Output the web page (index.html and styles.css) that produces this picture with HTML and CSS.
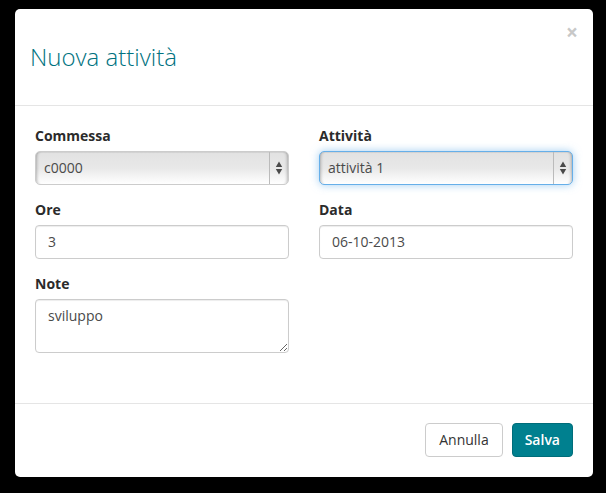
FILE: index.html
```html
<!DOCTYPE html>
<html lang="it">
<head>
<meta charset="utf-8">
<title>Nuova attività</title>
<link rel="stylesheet" href="styles.css">
</head>
<body>
<form class="modal" role="dialog" aria-labelledby="modal-title">
  <header class="modal-header">
    <h1 class="modal-title" id="modal-title">Nuova attività</h1>
    <button class="close" type="button">×</button>
  </header>
  <div class="modal-body">
    <div class="field">
      <label for="commessa">Commessa</label>
      <div class="select">
        <select id="commessa"><option>c0000</option></select>
        <svg class="arrows" viewBox="0 0 8 14" width="8" height="14"><path d="M4 .5 7.2 6H.8ZM.8 8h6.4L4 13.500Z"/></svg>
      </div>
    </div>
    <div class="field">
      <label for="attivita">Attività</label>
      <div class="select select-active">
        <select id="attivita"><option>attività 1</option></select>
        <svg class="arrows" viewBox="0 0 8 14" width="8" height="14"><path d="M4 .5 7.2 6H.8ZM.8 8h6.4L4 13.500Z"/></svg>
      </div>
    </div>
    <div class="field">
      <label for="ore">Ore</label>
      <input class="control" id="ore" type="text" value="3">
    </div>
    <div class="field">
      <label for="data">Data</label>
      <input class="control" id="data" type="text" value="06-10-2013">
    </div>
    <div class="field">
      <label for="note">Note</label>
      <textarea class="control" id="note" rows="2">sviluppo</textarea>
    </div>
  </div>
  <footer class="modal-footer">
    <button class="btn" type="button">Annulla</button>
    <button class="btn btn-primary" type="submit">Salva</button>
  </footer>
</form>
</body>
</html>
```
FILE: styles.css
```css
* { box-sizing: border-box; }

body {
  margin: 0;
  padding: 9px 13px 16px 15px;
  background: #000;
  color: #2b2b2b;
  font: 14px/20px "Open Sans", "Noto Sans", sans-serif;
}

.modal {
  background: #fff;
  border-radius: 5px;
}

.modal-header {
  display: flex;
  justify-content: space-between;
  align-items: flex-start;
  padding: 15px;
  border-bottom: 1px solid #e5e5e5;
}

.modal-title {
  margin: 16px 0 17px;
  color: #007280;
  font-size: 24px;
  font-weight: 300;
  line-height: 33px;
}

.close {
  padding: 0;
  border: 0;
  background: none;
  color: #c8c8c8;
  font: bold 21px/16px "Open Sans", sans-serif;
}

.modal-body {
  display: grid;
  grid-template-columns: 1fr 1fr;
  gap: 15px 30px;
  padding: 20px 20px 50px;
}

.field {
  display: flex;
  flex-direction: column;
  gap: 5px;
  min-width: 0;
}

label { font-weight: 700; }

.control {
  display: block;
  width: 100%;
  height: 34px;
  padding: 5px 12px 7px;
  border: 1px solid #ccc;
  border-radius: 4px;
  background: #fff;
  box-shadow: inset 0 1px 1px rgba(0, 0, 0, .075);
  color: #4a4a4a;
  font: inherit;
}

textarea.control {
  height: 54px;
  padding: 6px 12px;
  resize: vertical;
}

.select {
  position: relative;
  height: 34px;
  border: 1px solid #ccc;
  border-radius: 5px;
  background: linear-gradient(#e2e2e2, #e8e8e8 50%, #fff);
  box-shadow: inset 0 1px 1px rgba(0, 0, 0, .075), inset 4px 0 3px -3px rgba(0, 0, 0, .25), inset -4px 0 3px -3px rgba(0, 0, 0, .25);
}

.select::after {
  content: "";
  position: absolute;
  top: 0;
  bottom: 0;
  right: 18px;
  border-left: 1px solid #bbb;
}

.select select {
  appearance: none;
  display: block;
  width: 100%;
  height: 100%;
  padding: 0 24px 0 8px;
  border: 0;
  outline: 0;
  background: none;
  color: #4a4a4a;
  font: inherit;
}

.select-active {
  border-color: #66afe9;
  box-shadow: inset 0 1px 1px rgba(0, 0, 0, .075), inset 4px 0 3px -3px rgba(0, 0, 0, .25), inset -4px 0 3px -3px rgba(0, 0, 0, .25), 0 0 8px rgba(102, 175, 233, .6);
}

.arrows {
  position: absolute;
  top: 9px;
  right: 5px;
  fill: #4a4a4a;
  pointer-events: none;
}

.modal-footer {
  display: flex;
  justify-content: flex-end;
  gap: 9px;
  padding: 19px 20px 20px;
  border-top: 1px solid #e5e5e5;
}

.btn {
  padding: 6px 13px;
  border: 1px solid #ccc;
  border-radius: 4px;
  background: #fff;
  color: #333;
  font: inherit;
}

.btn-primary {
  padding: 6px 12px;
  border-color: #006d7a;
  background: #00808f;
  color: #fff;
  font-weight: 600;
}
```
